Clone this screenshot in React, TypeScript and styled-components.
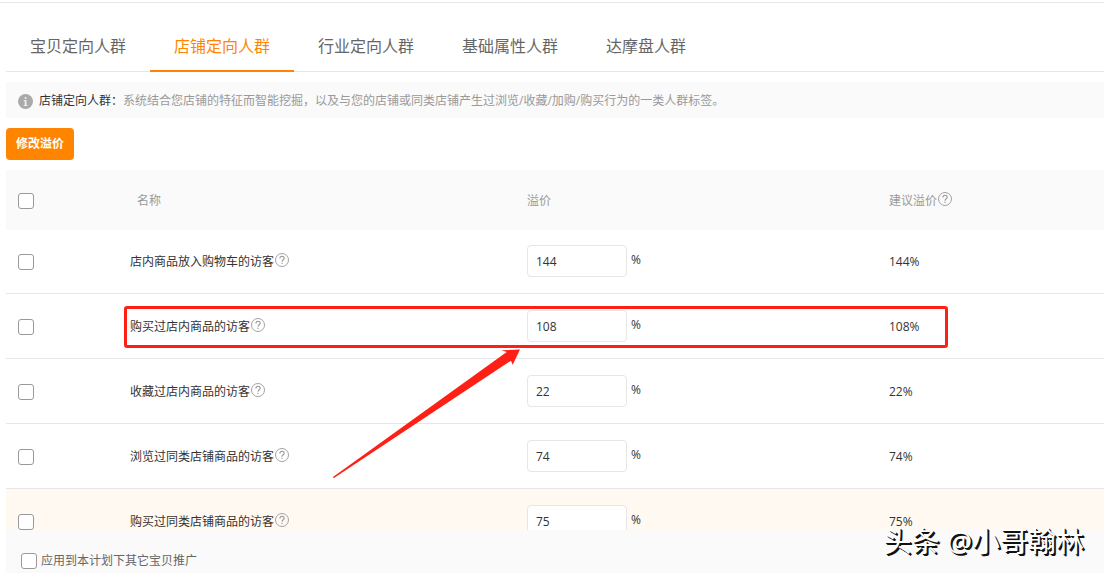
import React from "react";
import styled, { createGlobalStyle } from "styled-components";

const GlobalStyle = createGlobalStyle`
  * { box-sizing: border-box; }
  body {
    margin: 0;
    background: #fff;
    color: #333;
    font: 12px/18px "Open Sans", "Noto Sans CJK SC", sans-serif;
  }
  button, input { font: inherit; color: inherit; }
`;

const Page = styled.main`
  position: relative;
  display: flex;
  flex-direction: column;
  height: 100vh;
  padding-top: 2px;
  overflow: hidden;
`;

const TopRule = styled.hr`
  flex: none;
  width: 100%;
  height: 1px;
  margin: 0 0 17px;
  border: 0;
  background: #e6e6e6;
`;

const Content = styled.div`
  display: flex;
  flex: 1;
  flex-direction: column;
  min-height: 0;
  margin-left: 6px;
`;

const Tabs = styled.nav`
  display: flex;
  flex: none;
  height: 52px;
  box-shadow: inset 0 -1px #e6e6e6;
`;

const Tab = styled.button<{ $active?: boolean }>`
  padding: 2px 24px 0;
  border: 0;
  border-bottom: 2px solid ${(p) => (p.$active ? "#ff8500" : "transparent")};
  background: none;
  color: ${(p) => (p.$active ? "#ff8500" : "#666")};
  font-size: 16px;
  line-height: 24px;
  cursor: pointer;
`;

const Notice = styled.p`
  display: flex;
  flex: none;
  align-items: center;
  height: 36px;
  margin: 10px 0;
  padding: 2px 0 0 12px;
  background: #fafafa;
  color: #999;
`;

const NoticeLabel = styled.span`
  margin-left: 6px;
  color: #333;
`;

const PrimaryButton = styled.button`
  flex: none;
  align-self: flex-start;
  height: 32px;
  margin-bottom: 10px;
  padding: 0 10px;
  border: 0;
  border-radius: 4px;
  background: #ff8500;
  color: #fff;
  font-weight: 700;
  cursor: pointer;
`;

const TableArea = styled.section`
  position: relative;
  flex: 1;
  min-height: 0;
  overflow: hidden;
`;

const Table = styled.table`
  width: 100%;
  table-layout: fixed;
  border-spacing: 0;
`;

const HeadCell = styled.th<{ $indent?: boolean }>`
  height: 59px;
  padding: 3px 0 0 ${(p) => (p.$indent ? 19 : 12)}px;
  background: #fafafa;
  box-shadow: 0 1px #fafafa;
  color: #999;
  font-weight: 400;
  text-align: left;
`;

const Row = styled.tr<{ $hover?: boolean }>`
  background: ${(p) => (p.$hover ? "#fff9f2" : "transparent")};
`;

const Cell = styled.td`
  height: 65px;
  padding: 2px 0 0 12px;
  border-bottom: 1px solid #e6e6e6;
`;

const PremiumCell = styled(Cell)`
  padding-top: 0;
`;

const Checkbox = styled.input.attrs({ type: "checkbox" })`
  display: block;
  appearance: none;
  flex: none;
  width: 16px;
  height: 16px;
  margin: 0;
  border: 1px solid #999;
  border-radius: 3px;
  background: #fff;
  &:checked { background: #ff8500; }
`;

const WithIcon = styled.span`
  display: flex;
  align-items: flex-start;
  gap: 1px;
`;

const Premium = styled.label`
  display: flex;
  gap: 4px;
  line-height: 30px;
`;

const PremiumInput = styled.input`
  width: 100px;
  height: 32px;
  padding: 0 8px;
  border: 1px solid #e6e6e6;
  border-radius: 4px;
  background: #fff;
`;

const Footer = styled.footer`
  flex: none;
  height: 43px;
  padding: 22px 0 0 15px;
  background: #fafafa;
  color: #666;
`;

const FooterLabel = styled.label`
  display: flex;
  align-items: center;
  gap: 4px;
`;

const Highlight = styled.div`
  position: absolute;
  top: 136px;
  left: 118px;
  width: 824px;
  height: 42px;
  border: 3px solid #ff2015;
  border-radius: 3px;
  pointer-events: none;
`;

const Arrow = styled.svg`
  position: absolute;
  top: 178px;
  left: 324px;
  pointer-events: none;
`;

const Watermark = styled.div`
  position: absolute;
  right: 20px;
  bottom: 14px;
  color: #fff;
  font-size: 28px;
  line-height: 36px;
  text-shadow: 1px 1px #111, 2px 2px #111;
  white-space: nowrap;
`;

const HelpIcon = () => (
  <svg width="14" height="14" viewBox="0 0 14 14" fill="none" stroke="#999" aria-hidden="true">
    <circle cx="7" cy="7" r="6.5" strokeWidth="0.9" />
    <path d="M4.9 5.4C4.9 2.6 9.2 2.7 9.2 5.2C9.2 6.7 7 6.8 7 8.7M7 9.7v1.3" strokeWidth="1.1" />
  </svg>
);

const InfoIcon = () => (
  <svg width="15" height="15" viewBox="0 0 15 15" aria-hidden="true">
    <circle cx="7.5" cy="7.5" r="7.5" fill="#aaa" />
    <path d="M6.7 3h1.8v1.7H6.7zM5.7 6h2.8v5h1v.9H5.7V11h1V6.9h-1z" fill="#eee" />
  </svg>
);

const tabs = ["宝贝定向人群", "店铺定向人群", "行业定向人群", "基础属性人群", "达摩盘人群"];

const audiences = [
  { name: "店内商品放入购物车的访客", value: 144 },
  { name: "购买过店内商品的访客", value: 108 },
  { name: "收藏过店内商品的访客", value: 22 },
  { name: "浏览过同类店铺商品的访客", value: 74 },
  { name: "购买过同类店铺商品的访客", value: 75, hover: true },
];

export default function App() {
  return (
    <Page>
      <GlobalStyle />
      <TopRule />
      <Content>
        <Tabs>
          {tabs.map((tab, i) => (
            <Tab key={tab} type="button" $active={i === 1}>{tab}</Tab>
          ))}
        </Tabs>
        <Notice>
          <InfoIcon />
          <NoticeLabel>店铺定向人群：</NoticeLabel>
          系统结合您店铺的特征而智能挖掘，以及与您的店铺或同类店铺产生过浏览/收藏/加购/购买行为的一类人群标签。
        </Notice>
        <PrimaryButton type="button">修改溢价</PrimaryButton>
        <TableArea>
          <Table>
            <colgroup>
              <col width="112" />
              <col width="397" />
              <col width="362" />
              <col />
            </colgroup>
            <thead>
              <tr>
                <HeadCell><Checkbox aria-label="全选" /></HeadCell>
                <HeadCell $indent>名称</HeadCell>
                <HeadCell>溢价</HeadCell>
                <HeadCell><WithIcon>建议溢价<HelpIcon /></WithIcon></HeadCell>
              </tr>
            </thead>
            <tbody>
              {audiences.map(({ name, value, hover }) => (
                <Row key={name} $hover={hover}>
                  <Cell><Checkbox aria-label={name} /></Cell>
                  <Cell><WithIcon>{name}<HelpIcon /></WithIcon></Cell>
                  <PremiumCell>
                    <Premium>
                      <PremiumInput aria-label={`${name} 溢价`} defaultValue={value} />
                      %
                    </Premium>
                  </PremiumCell>
                  <Cell>{value}%</Cell>
                </Row>
              ))}
            </tbody>
          </Table>
          <Highlight />
          <Arrow width="200" height="134" viewBox="0 0 200 134" fill="#ff2015" aria-hidden="true">
            <path d="M3 129 L176.7 4 L171.5 2.3 L190 1.5 L182.7 16.7 L181 12.7 L3.6 130.2 Z" />
          </Arrow>
        </TableArea>
        <Footer>
          <FooterLabel><Checkbox />应用到本计划下其它宝贝推广</FooterLabel>
        </Footer>
      </Content>
      <Watermark>头条 @小哥翰林</Watermark>
    </Page>
  );
}
